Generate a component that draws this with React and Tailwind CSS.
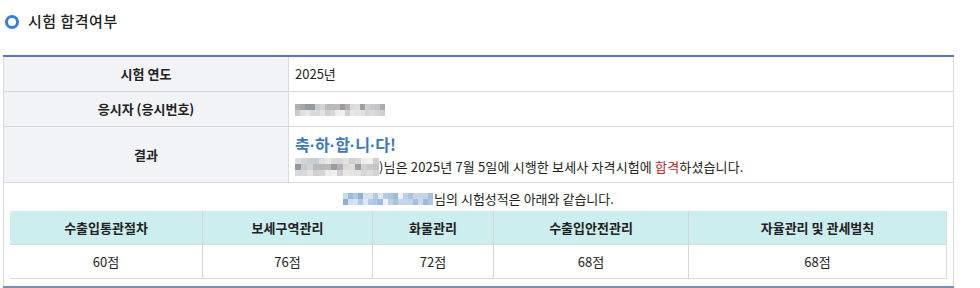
const gray = ['#b2afb0', '#a19ea1', '#bcb9b8', '#959ba5', '#c2c5cd', '#ddd9d6', '#b8bbbd', '#a6a8ab', '#d2d0ce', '#9e9a9c', '#c8cbcf', '#abacae', '#e0dedc', '#bab8bb', '#979a9e', '#cbc9c7', '#afb1b4', '#d4d4d4'];
const grayLight = ['#dedddd', '#d0d0d3', '#e4e3e2', '#c8cbd0', '#e1e1e5', '#efedeb', '#d8d9da', '#d3d4d6', '#e9e8e7', '#d1cfd0', '#dde0e2', '#d6d6d7', '#f2f1f0', '#d9d8da', '#cdced1', '#e4e3e2', '#d5d6d8', '#e8e8e8'];
const blue = ['#c9d8ea', '#a9c2de', '#b6cbe3', '#8fb0d6', '#c2d4e8', '#eef2f7', '#b3c9e2', '#9db9dc', '#c7d7ea', '#abc4df', '#d3e0ee', '#a3bede', '#bcd0e6', '#dfe8f2', '#b0c7e1', '#c5d6e9', '#9fbbdc', '#d6e2ef'];

function Mosaic({ rows, cols, cw, ch }) {
  return (
    <span className="inline-flex flex-col align-middle">
      {rows.map((palette, r) => (
        <span key={r} className="flex">
          {Array.from({ length: cols }).map((_, c) => (
            <span
              key={c}
              className="block"
              style={{ width: cw, height: ch, background: palette[(c * 7 + r * 3) % palette.length] }}
            />
          ))}
        </span>
      ))}
    </span>
  );
}

const subjects = [
  { name: '수출입통관절차', score: '60점', w: 'w-[193px]' },
  { name: '보세구역관리', score: '76점', w: 'w-[170px]' },
  { name: '화물관리', score: '72점', w: 'w-[121px]' },
  { name: '수출입안전관리', score: '68점', w: 'w-[195px]' },
  { name: '자율관리 및 관세벌칙', score: '68점', w: 'flex-1' },
];

function Dot() {
  return <span className="font-['Liberation_Sans',sans-serif] font-bold">·</span>;
}

function App() {
  return (
    <div className="h-[288px] w-[980px] bg-white font-['Noto_Sans_CJK_KR','Noto_Sans',sans-serif] text-[13px] text-[#222]">
      <div className="flex h-[42px] items-center gap-[9px] pl-[5px] pt-[1px]">
        <span className="block h-[14px] w-[14px] rounded-full border-[3px] border-[#3b7fd9]" />
        <span className="text-[15px] font-medium tracking-[0.5px] text-[#222]">시험 합격여부</span>
      </div>

      <div className="ml-[3px] mt-[13px] w-[951px] border-t-2 border-b-2 border-t-[#5b77bb] border-b-[#7a8db8]">
        <div className="flex h-[35px] border-b border-x border-[#d9d9d9]">
          <div className="flex w-[285px] items-center justify-center border-r border-[#dcdcdc] bg-[#f2f3f7] font-bold">
            시험 연도
          </div>
          <div className="flex items-center pl-[6px]">2025년</div>
        </div>

        <div className="flex h-[35px] border-b border-x border-[#d9d9d9]">
          <div className="flex w-[285px] items-center justify-center border-r border-[#dcdcdc] bg-[#f2f3f7] font-bold">
            응시자 (응시번호)
          </div>
          <div className="flex items-center pl-[6px] pt-[1px]">
            <Mosaic rows={[gray, grayLight]} cols={18} cw={5} ch={6} />
          </div>
        </div>

        <div className="flex h-[56px] border-b border-x border-[#d9d9d9]">
          <div className="flex w-[285px] items-center justify-center border-r border-[#dcdcdc] bg-[#f2f3f7] font-bold">
            결과
          </div>
          <div className="flex flex-col justify-center pl-[6px]">
            <div className="text-[16px] font-bold leading-[22px] text-[#3f78b8]">
              축<Dot />하<Dot />합<Dot />니<Dot />다!
            </div>
            <div className="flex items-center leading-[20px] tracking-[0.15px]">
              <Mosaic rows={[grayLight, gray, grayLight]} cols={14} cw={6} ch={6} />
              <span>)님은 2025년 7월 5일에 시행한 보세사 자격시험에 <span className="text-[#b22a2a]">합격</span>하셨습니다.</span>
            </div>
          </div>
        </div>

        <div className="border-x border-[#d9d9d9] pb-[7px] pl-[6px] pr-[6px]">
          <div className="flex h-[28px] items-center justify-center pt-[4px]">
            <Mosaic rows={[blue, blue]} cols={18} cw={5} ch={6} />
            <span className="ml-[1px]">님의 시험성적은 아래와 같습니다.</span>
          </div>
          <div className="border-b border-r border-[#d9d9d9]">
            <div className="flex h-[34px] border-b border-[#d9d9d9] bg-[#cdeeee] font-bold">
              {subjects.map((s, i) => (
                <div
                  key={s.name}
                  className={`${s.w} flex items-center justify-center ${i < 4 ? 'border-r border-[#d6d6d6]' : ''}`}
                >
                  {s.name}
                </div>
              ))}
            </div>
            <div className="flex h-[33px]">
              {subjects.map((s, i) => (
                <div
                  key={s.name}
                  className={`${s.w} flex items-center justify-center ${i < 4 ? 'border-r border-[#d6d6d6]' : ''}`}
                >
                  {s.score}
                </div>
              ))}
            </div>
          </div>
        </div>
      </div>
    </div>
  );
}

export default App;
